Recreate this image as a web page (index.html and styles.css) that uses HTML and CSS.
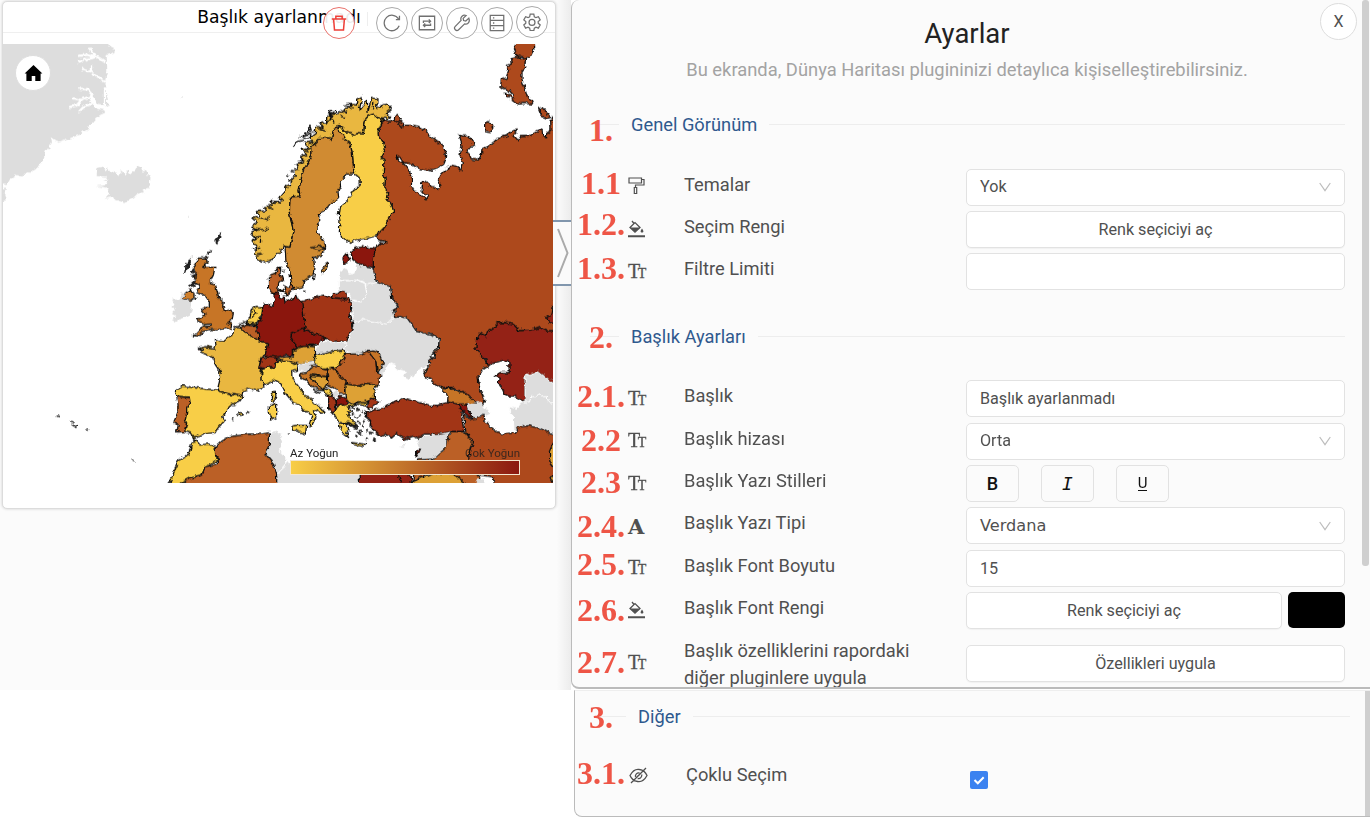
FILE: index.html
```html
<!DOCTYPE html>
<html lang="tr">
<head>
<meta charset="utf-8">
<title>Ayarlar</title>
<link rel="stylesheet" href="styles.css">
</head>
<body>
<svg class="defs" aria-hidden="true">
  <symbol id="chev" viewBox="0 0 12 10"><path d="M.7 1 6 8.600 11.300 1" fill="none" stroke="#bdbdbd" stroke-width="1.200"/></symbol>
  <symbol id="bucket" viewBox="0 0 17 18"><path d="M4 1l2 2.500M2 7.500 7 2.600l5 5-5 4.600z" fill="none" stroke="#505050" stroke-width="1.300"/><path d="M2 7.500h10l-5 4.700z" fill="#505050"/><path d="M14 8.600c2 2.700 1.700 4 0 4s-2-1.300 0-4z" fill="#505050"/><path d="M0 15.200h17v2H0z" fill="#505050"/></symbol>
</svg>
<div class="workspace">
  <section class="card">
    <header class="card-head">
      <h2 class="card-title">Başlık ayarlanmadı</h2>
      <i class="head-sep"></i>
      <div class="tools">
        <button class="tool danger"><svg viewBox="0 0 20 20"><path d="M2 5.500h16M6.500 5V2.500h7V5M4 5.500l1 12.300h10l1-12.300"/></svg></button>
        <button class="tool"><svg viewBox="0 0 20 20"><path d="M17.300 5.500A8.600 8.600 0 1 0 18 13M18.300 2V6.300h-4"/></svg></button>
        <button class="tool"><svg viewBox="0 0 20 20"><path d="M1.500 2.500h17v15h-17zM6 10V8h8M12 6l2 2-2 2M14 10.500v2H6M8 10.500l-2 2 2 2"/></svg></button>
        <button class="tool"><svg viewBox="0 0 20 20"><path d="M17.600 4.600l-3.400 3.200-2.400-.5-.5-2.400 3.300-3.200c-3.300-1.200-7 1.400-5.600 5.400L2.300 14c-2 2.300 1.400 5.600 3.700 3.700l6.900-6.700c4 1.400 6.200-3 4.700-6.400z"/></svg></button>
        <button class="tool"><svg viewBox="0 0 20 20"><path d="M2.500 1.500h15v17h-15zM2.500 7.200h15M2.500 12.900h15M5.500 4.400h1.500M5.500 10h1.500M5.500 15.700h1.500"/></svg></button>
        <button class="tool last"><svg viewBox="0 0 20 20"><path d="M8 1.300h4l.6 2.900 1.800 1 2.700-1 2 3.500-2.200 1.900v1.800l2.200 1.900-2 3.500-2.700-1-1.800 1-.6 2.900H8l-.6-2.900-1.800-1-2.700 1-2-3.500 2.200-1.900V9.600L.9 7.700l2-3.500 2.700 1 1.800-1z"/><circle cx="10" cy="10.500" r="3.300"/></svg></button>
      </div>
    </header>
    <div class="map">
      <svg class="map-svg" viewBox="9 132 1650 1317">
        <filter id="coast" filterUnits="userSpaceOnUse" x="0" y="120" width="1680" height="1350">
          <feTurbulence type="fractalNoise" baseFrequency=".07" numOctaves="2" seed="4"/>
          <feDisplacementMap in="SourceGraphic" scale="16" xChannelSelector="R" yChannelSelector="G"/>
        </filter>
        <g filter="url(#coast)">
        <g class="none">
          <path d="M-9 112H315L330 138 345 146 343 160 320 165 322 210 316 240 320 270 322 290 326 320 308 322 316 338 300 345 282 362 265 385 245 402 215 413 195 420 176 428 152 412 156 428 137 455 132 475 118 499 100 509 95 518 78 517 67 530 50 525 30 538 22 552 -9 548zM-9 570 22 566 14 578 20 600 -9 608z"/>
          <path d="M292 505 308 500 320 514 327 505 332 524 345 513 355 528 364 512 376 524 386 510 391 522 403 512 411 496 424 504 425 515 440 512 443 528 452 532 449 553 437 568 411 582 398 596 371 610 350 600 335 592 314 596 320 588 330 580 318 563 290 558 313 556 326 549 309 540 324 540 318 530 290 528z"/>
        </g>
        <path class="fjord" d="M318 188 300 176 284 166 268 144M284 172 262 164 234 168M284 172 258 178 234 186M318 248 294 230 276 216 246 206M276 216 276 192M315 262V320M328 330 290 322 278 286 262 268 238 266M282 310 254 318 234 338M278 286 244 300 218 294M244 300 230 316 208 322"/>
        <path class="fjord wide" d="M316 322 286 318 274 290"/>
        <path class="none" d="M540 290h3v3h-3zM561 654h3v3h-3z"/>

        <g transform="translate(690 0)">
          <path class="c-ru" d="M455 370 462 362 480 366 495 360 512 372 520 375 548 376 563 378 585 390 600 408 618 422 627 428 640 440 646 455 650 468 642 488 625 505 605 512 580 508 560 502 540 490 520 488 510 472 500 468 508 486 522 492 530 502 540 518 545 542 544 558 551 572 565 578 575 590 590 596 596 586 583 578 573 566 576 546 590 548 605 558 625 568 633 558 625 540 635 522 650 508 660 495 680 498 692 512 697 490 690 465 696 440 692 418 685 403 698 408 715 408 728 422 734 438 720 442 709 458 718 464 725 478 745 480 754 465 756 450 780 435 800 418 832 406 840 394 862 390 850 405 865 422 872 410 900 408 918 398 936 388 938 408 950 414 950 400 963 390 962 366 969 350H995V992L950 993 930 983 905 990 870 993 850 973 825 968 805 968 790 985 770 1008 750 1000 738 1035 755 1065 770 1090 780 1095 760 1108 744 1130 750 1170 765 1202 755 1215 735 1210 700 1180 665 1162 630 1162 595 1135 578 1120 592 1106 602 1088 594 1080 616 1070 612 1058 625 1050 628 1015 600 1002 585 998 560 995 550 980 534 976 532 955 515 950 495 952 490 930 508 922 494 912 490 900 482 862 440 845 430 820 428 780 435 745 450 728 468 730 465 722 450 722 440 705 465 680 472 666 491 630 481 608 468 600 473 580 464 560 466 540 460 520 462 480 453 470 466 445 460 425 446 412 444 395z"/>
          <path class="c-ru" d="M865 112H912L914 142 900 172 885 175 860 168 855 158 850 146zM842 178 862 170 872 178 890 174 886 205 876 215 876 240 885 265 892 290 910 305 906 312 885 310 865 312 845 298 850 285 838 272 822 265 812 258 814 238 828 235 836 210 832 200 844 195zM826 280 840 284 842 296 830 290zM764 370 775 365 792 380 782 398 764 395zM926 325 936 322 952 340 962 352 952 355 935 348z"/>
          <path class="c-ru" d="M495 350 505 346 514 356 505 364 520 372 518 384 505 370 492 362z"/>
          <path class="c-fi" d="M455 370 444 395 446 412 460 425 466 445 453 470 462 480 460 520 466 540 464 560 473 580 468 600 481 608 491 630 472 666 465 680 440 705 430 710 400 718 380 722 360 730 345 718 330 712 334 700 328 695 330 660 325 645 328 622 345 610 355 596 365 585 370 572 385 560 391 555 390 535 375 522 371 512 367 460 360 430 345 418 338 405 328 395 325 380 336 382 345 395 372 405 383 400 400 402 402 385 406 358 414 348 430 342 442 352 450 354 455 362z"/>
          <path class="c-no" d="M165 740 180 742 190 690 178 640 180 600 188 590 210 588 207 570 218 515 240 478 246 460 245 440 274 412 305 415 311 390 325 376 336 382 345 395 372 405 383 400 400 402 402 385 406 358 414 348 430 342 442 352 450 354 455 370 465 362 456 350 468 352 475 360 482 352 468 340 484 326 472 312 455 316 440 325 441 296 427 292 420 312 414 335 412 300 398 320 387 334 397 290 380 297 380 312 362 310 366 322 344 325 350 336 332 332 320 345 312 338 300 360 306 340 290 350 290 368 270 370 280 384 258 378 256 400 240 412 248 424 226 430 234 448 215 448 230 462 212 472 218 485 198 490 206 508 192 510 196 528 180 545 182 560 165 556 165 575 148 596 160 600 138 605 120 602 128 615 100 620 110 632 82 635 86 650 66 655 86 665 65 680 82 690 64 700 75 712 66 722 80 742 74 765 84 778 105 788 125 780 140 762 155 758 160 735z"/>
          <path class="ink" d="M190 440 198 426 222 420M206 412 228 404 252 395M215 410 232 402 244 410 226 416zM232 396 240 378 244 392 222 400 240 404M290 348 296 334 304 350M340 315 364 312 370 325M172 528l6-4M182 514l7 2M120 600l30 10M75 650l35 8 12-8M66 690l40-2 6-4M68 720l22-12 2 18M68 745l26 4M80 765l18-4M110 620l20 8M205 490l18-6M225 455l18-8M265 385l20 8M290 365l18-6 4 12M385 320l4 14M432 308l-5 20M300 336l4-6M318 338l3-6M162 562l14 4M240 426l12 4M330 345l12 8M350 318l14 10M460 356l-6 14"/>
          <path class="c-se" d="M325 385 328 395 338 405 345 418 360 430 367 460 371 512 375 522 348 522 340 535 330 543 332 560 324 575 326 592 300 612 285 632 268 638 270 655 261 678 262 700 272 710 285 728 287 740 275 765 258 772 250 772 253 790 250 822 222 842 218 860 190 868 183 842 180 815 168 785 165 740 180 742 190 690 178 640 180 600 188 590 210 588 207 570 218 515 240 478 246 460 245 440 274 412 305 415 311 390 320 384z"/>
          <path class="ink" d="M240 744 268 738 284 744 268 752 242 746"/>
          <path class="c-se" d="M276 810 283 796 294 790 288 805 279 820z"/>
        </g>

        <g transform="translate(450 690)">
          <path class="none seam" d="M585 345 600 325 608 290 608 278 635 268 710 280 728 263 755 260 772 265 790 290 800 305 840 312 868 325 865 350 840 378 850 385 835 392 842 403 805 422 798 435 772 450 755 440 770 425 740 418 735 405 720 400 700 430 690 432 682 430 695 410 700 400 684 364 670 360 655 362 630 372 608 372 583 362z"/>
          <path class="none seam" d="M605 232 605 212 635 215 650 190 645 165 680 155 715 165 722 170 725 205 748 230 730 240 735 262 728 263 710 282 635 268 608 278z"/>
          <path class="none seam" d="M565 152 600 152 620 150 645 160 650 190 635 215 605 210 595 190 565 180z"/>
          <path class="none seam" d="M565 150 570 122 582 115 592 116 600 133 612 130 618 102 632 98 645 108 668 112 680 155 652 165 640 155 620 150 600 152z"/>
          <path class="ink" d="M668 112 680 155 715 165 722 170 725 205 748 230 730 240 735 262 755 260 772 265 790 290 800 305 840 312 868 325 865 350 840 378 850 385 835 392 842 403"/>
          <path class="c-dr" d="M602 66 615 55 640 50 675 57 670 90 670 112 645 108 620 98 608 88zM578 84 592 70 594 82 600 92 582 98z"/>
          <path class="c-uk" d="M145 85 170 83 175 95 158 108 168 112 195 112 190 135 178 158 195 163 203 190 207 205 220 215 218 228 224 245 238 240 250 250 246 270 233 278 245 285 243 295 215 297 198 300 182 298 160 305 145 318 133 317 150 298 165 290 184 288 183 282 160 284 158 278 140 270 160 260 165 252 155 240 168 232 178 232 178 215 165 196 150 192 140 188 148 165 135 160 140 150 128 145 140 130 130 120 138 100z"/>
          <path class="ink fill" d="M197 30 212 10 210 22 200 42zM170 75 182 58 180 72zM103 130 108 98 124 85 118 108zM120 125 132 115 130 130zM118 165 132 152 140 160 128 176zM124 138l10-5 3 10zM135 200l4 3-2 8z"/>
          <path class="c-ni" d="M97 205 105 190 120 180 132 190 132 204 120 212z"/>
          <path class="none" d="M96 186 105 190 97 206 118 212 126 215 125 238 118 258 90 268 75 278 63 270 80 258 66 250 75 240 64 230 74 222 66 210 90 208z"/>
          <path class="c-fr" d="M265 292 280 302 300 315 322 328 335 335 353 342 347 372 333 386 328 408 335 412 333 430 338 450 345 468 320 482 300 476 280 482 275 498 240 492 215 486 202 480 212 440 206 430 207 418 214 430 198 405 190 382 165 373 152 368 160 362 148 355 165 350 190 354 198 350 196 328 208 332 225 333 230 322 248 314 252 297z"/>
          <path class="c-be" d="M265 292 290 285 315 288 320 302 325 310 327 332 310 322 300 315 280 302z"/>
          <path class="c-nl" d="M288 283 300 262 304 238 318 232 338 235 336 252 330 260 333 274 318 276 320 290 308 282z"/>
          <path class="ink" d="M306 262 318 250 312 240M292 280 330 282M250 292 276 280 292 272"/>
          <path class="c-dk" d="M385 190 368 190 356 178 355 140 376 132 382 118 392 112 390 130 398 150 386 160 383 178zM402 168 415 172 428 155 425 180 412 194 405 185zM386 180 396 178 398 190z"/>
          <path class="ink" d="M398 122h6M460 182l6 4M385 175l10 8M405 200l10-6M490 150l4-20"/>
          <path class="c-dr" d="M338 235 345 222 368 228 375 210 370 190 385 192 390 205 402 200 405 216 430 205 440 195 446 210 457 215 462 240 460 255 466 285 463 297 440 303 420 315 430 335 443 352 430 360 430 380 410 376 375 382 345 378 353 342 325 330 327 315 320 302 325 275 335 265z"/>
          <path class="c-pl" d="M455 215 490 205 520 195 540 203 590 206 602 210 605 235 600 250 608 280 608 292 598 310 590 335 560 333 545 335 525 325 515 315 490 312 466 297 462 260z"/>
          <path class="c-pl" d="M543 203 548 192 560 192 568 184 588 186 590 205z"/>
          <path class="c-dr" d="M420 315 440 303 460 297 478 305 490 312 512 314 525 325 505 345 480 345 465 348 443 352 430 335z"/>
          <path class="none seam" d="M497 362 510 340 530 332 555 337 590 336 582 360 550 364 520 372 500 370z"/>
          <path class="c-au" d="M378 384 400 382 412 380 430 384 432 362 445 353 470 348 495 350 497 370 490 392 475 396 445 402 415 392 390 393z"/>
          <path class="c-hu" d="M497 372 520 372 550 364 580 360 588 372 570 400 560 412 520 418 500 408 490 390z"/>
          <path class="c-ch" d="M328 408 335 386 355 378 378 382 385 395 375 402 370 415 360 408 345 416 330 412z"/>
          <path class="c-fi" d="M335 432 336 418 345 416 360 408 370 415 378 402 390 393 415 392 440 402 440 420 425 425 426 445 450 475 468 500 485 506 490 520 508 528 522 545 515 550 500 540 490 545 498 560 485 588 477 586 485 560 475 545 465 545 450 525 430 518 405 488 392 460 375 450 345 465 337 455zM425 588 440 586 470 586 467 612 445 605 428 598zM358 525 370 528 380 522 380 562 364 570 358 550zM366 490 376 484 378 500 372 518 364 508z"/>
          <path class="none seam" d="M440 404 475 396 490 394 497 405 480 420 468 428 445 422z"/>
          <path class="c-uk" d="M445 434 465 430 485 410 500 406 520 418 530 420 532 440 482 434 484 445 500 462 520 482 505 480 475 458 462 445 455 440z"/>
          <path class="ink" d="M465 450 490 478 510 490M445 435l10 10"/>
          <path class="c-au" d="M480 436 532 440 534 462 520 480 500 462z"/>
          <path class="c-uk" d="M528 416 545 412 560 425 575 440 590 452 585 465 588 488 565 494 560 478 548 472 532 465 536 440z"/>
          <path class="c-fi" d="M520 480 532 474 547 484 540 498 524 490z"/>
          <path class="none seam" d="M545 492 558 480 570 490 560 502 550 500z"/>
          <path class="c-pl" d="M536 498 546 495 556 515 556 545 548 552 536 538z"/>
          <path class="c-dr" d="M555 515 565 500 585 500 593 512 588 524 562 528z"/>
          <path class="c-ro" d="M545 412 560 412 570 400 588 372 608 372 630 372 655 362 678 395 680 428 700 436 685 445 684 465 650 460 625 468 590 462 588 450 570 440 562 425z"/>
          <path class="c-uk" d="M655 362 670 360 684 364 700 400 695 410 682 430 678 395z"/>
          <path class="c-bg" d="M588 462 625 468 650 460 684 465 672 485 674 505 652 512 640 520 600 520 590 510 588 488z"/>
          <path class="c-fi" d="M552 552 562 530 600 520 640 518 652 514 648 528 620 522 598 532 605 548 592 545 600 565 625 590 612 585 600 580 590 585 597 600 590 605 596 622 580 610 570 595 568 582 595 582 565 575 555 560zM603 638 648 643 640 650 608 644z"/>
          <path class="ink fill" d="M592 575l35 20-6 2-30-16zM620 535l8 4-8 4zM645 545l8 2-4 6zM638 568l10 4-6 8zM660 580l5 6-6 4zM630 600l6 4-5 4zM618 616l5 3-6 3zM660 605l8 3-6 5zM650 622l4 5-6 2zM672 622l5 8-4 8-4-6zM606 550l5 3-4 3zM628 556l4 3-4 4zM640 585l5 3-4 4zM650 600l4 5-4 2z"/>
          <path class="ink" d="M590 532 608 528 614 538M630 548l10-6M612 560l14 4M645 560l12 6M632 580l-8-4M620 605l14 8"/>
          <path class="c-tr" d="M652 514 664 504 690 514 675 525 655 538zM650 548 670 540 700 535 710 525 765 505 785 512 805 517 840 526 865 526 888 518 910 518 925 522 938 540 935 560 942 605 900 605 880 610 850 612 825 612 805 625 790 618 765 628 740 610 725 624 705 612 690 618 675 605 662 590 662 575 650 562z"/>
          <path class="c-uk" d="M870 472 905 475 925 488 945 488 978 520 955 524 925 522 905 518 893 515 894 498z"/>
          <path class="none" d="M950 522 978 520 995 518 1000 528 1015 545 1020 548 1002 556 980 562 965 570 968 562 957 542z"/>
          <path class="c-dr" d="M925 522 950 522 955 540 968 562 968 568 945 550 935 540z"/>
          <path class="c-kz" d="M1011 403 1008 390 992 375 978 355 980 320 990 310 1008 320 1012 305 1030 293 1045 278 1065 278 1090 283 1108 302 1145 300 1170 293 1190 303 1235 300V458H1209L1165 425 1125 437V517L1095 498 1068 498 1060 480 1045 460 1048 445 1032 438 1052 428 1078 428 1076 392 1055 392 1030 400z"/>
          <path class="c-kz" d="M1235 218H1212L1206 250 1190 262 1195 275 1209 280H1235z"/>
          <path class="none seam" d="M1125 437 1165 425 1209 458H1235V615H1209L1170 595 1135 587 1105 592 1092 605 1090 560 1078 545 1078 530 1100 535 1112 520 1125 517z"/>
          <path class="none" d="M1070 502 1090 500 1112 520 1100 535 1075 530z" opacity="0"/>
          <path class="line-w" d="M1125 520 1142 518 1145 500 1160 500 1168 488 1180 500 1192 500 1195 518 1225 520"/>
          <path class="c-ru" d="M940 552 965 568 980 565 1002 556 1006 575 1020 590 1040 605 1060 613 1092 608 1105 592 1135 587 1170 595 1209 615H1235V785H1040L1030 740 1010 738 985 735 965 715 955 690 960 660 968 635 948 608z"/>
          <path class="c-ro" d="M905 605 942 605 950 615 968 638 960 655 955 680 965 710 982 735 990 745 978 785H945L910 730 850 715 850 685 885 655 892 625z"/>
          <path class="none" d="M802 630 825 618 880 610 905 605 890 622 888 650 850 685 840 695 805 700 800 680 810 655z"/>
          <path class="c-dr" d="M800 665 812 655 808 665 798 682z"/>
          <path class="c-ro" d="M790 740 800 690 850 688 840 730 800 745 788 757z"/>
          <path class="c-au" d="M785 785V759L810 740 830 740 855 728 910 732 945 759V785z"/>
          <path class="none" d="M975 785V759L982 745 1000 745 1008 759V785zM745 650 770 643 765 650z"/>
          <path class="sea" d="M1000 785V748L1015 752 1030 744 1040 785z"/>
          <path class="c-au" d="M1235 640H1209L1198 665 1200 700 1209 712H1235zM1235 735H1209L1203 745 1209 757H1235z"/>
          <path class="none seam" d="M380 785 378 735 405 710 405 695 440 700 625 705 632 785z"/>
          <path class="c-kz" d="M626 706H768L782 745 790 785H630z"/>
          <path class="ink" d="M745 735 755 759"/>
          <path class="none seam" d="M358 612 380 604 398 612 392 630 400 642 388 660 408 682 404 708 380 735 370 700 345 670 358 645z"/>
          <path class="c-ro" d="M195 650 215 632 240 620 300 612 330 613 358 608 358 645 345 670 370 700 380 735V785H65L95 759 120 745 150 738 165 712 205 700 205 685 197 675z"/>
          <path class="c-fi" d="M50 785 60 759 75 718 85 690 115 675 125 640 140 632 150 645 175 642 195 650 197 675 205 690 188 700 165 712 155 735 125 742 95 759 65 785z"/>
          <path class="c-ro" d="M80 500 118 502 120 515 110 530 110 550 106 570 110 580 104 605 80 606 85 585 72 575 84 545 84 520z"/>
          <path class="c-fi" d="M80 498 76 480 95 468 150 475 200 480 240 494 278 498 268 512 235 530 218 560 224 572 205 592 195 608 160 612 145 617 134 625 120 608 104 605 110 580 106 570 110 550 110 530 120 515 118 502zM262 556 272 548 280 554 272 560z"/>
          <path class="ink" d="M288 548l4-3 6 3M245 570l5-5M132 625 140 634M417 611l2 2M-52 690l6 2M-280 558l8 2M-238 574l12 2M-236 582l14 10 2-6M-190 594l4 8"/>
        </g>
        </g>
      </svg>
      <button class="home"><svg viewBox="0 0 20 18"><path d="M10 0 0 9.500h2V18h6v-5.500h4V18h6V9.500h2z"/></svg></button>
      <div class="legend">
        <div class="legend-text"><span>Az Yoğun</span><span>Çok Yoğun</span></div>
        <div class="legend-bar"></div>
      </div>
    </div>
  </section>
  <button class="drawer-tab"><svg viewBox="0 0 12 50"><path d="M1 1 10.500 25 1 49"/></svg></button>
</div>

<main class="side">
  <section class="panel">
    <i class="scroll"></i>
    <button class="close">X</button>
    <h1>Ayarlar</h1>
    <p class="sub">Bu ekranda, Dünya Haritası plugininizi detaylıca kişiselleştirebilirsiniz.</p>

    <div class="divider"><span>Genel Görünüm</span></div>
    <div class="row"><svg class="ico" viewBox="0 0 17 18"><path d="M1 1h12.500v5H1zM13.500 2.500h2.500v5.500H7.500V10.500M6.300 10.500h2.400v6H6.300z" fill="none" stroke="#505050" stroke-width="1.200"/></svg><label>Temalar</label><div class="field"><span>Yok</span><svg class="chev"><use href="#chev"/></svg></div></div>
    <div class="row"><svg class="ico"><use href="#bucket"/></svg><label>Seçim Rengi</label><button class="field btn">Renk seçiciyi aç</button></div>
    <div class="row"><span class="ico tt">T<small>T</small></span><label>Filtre Limiti</label><div class="field"></div></div>

    <div class="divider second"><span>Başlık Ayarları</span></div>
    <div class="row"><span class="ico tt">T<small>T</small></span><label>Başlık</label><div class="field">Başlık ayarlanmadı</div></div>
    <div class="row"><span class="ico tt">T<small>T</small></span><label>Başlık hizası</label><div class="field"><span>Orta</span><svg class="chev"><use href="#chev"/></svg></div></div>
    <div class="row"><span class="ico tt">T<small>T</small></span><label>Başlık Yazı Stilleri</label><div class="styles"><button class="style b">B</button><button class="style i">I</button><button class="style u"><span>U</span></button></div></div>
    <div class="row"><span class="ico face">A</span><label>Başlık Yazı Tipi</label><div class="field verdana">Verdana<svg class="chev"><use href="#chev"/></svg></div></div>
    <div class="row"><span class="ico tt">T<small>T</small></span><label>Başlık Font Boyutu</label><div class="field num">15</div></div>
    <div class="row"><svg class="ico"><use href="#bucket"/></svg><label>Başlık Font Rengi</label><div class="color"><button class="field btn">Renk seçiciyi aç</button><i class="swatch"></i></div></div>
    <div class="row tall"><span class="ico tt">T<small>T</small></span><label>Başlık özelliklerini rapordaki diğer pluginlere uygula</label><button class="field btn">Özellikleri uygula</button></div>
  </section>

  <section class="panel more">
    <i class="scroll"></i>
    <div class="divider"><span>Diğer</span></div>
    <div class="row"><svg class="ico eye" viewBox="0 0 19 17"><path d="M1 8.500C4 3 8 2 10.500 2.500 14 3 16.500 5 18 8.500 15 14 11 15 8.500 14.500 5 14 2.500 12 1 8.500zM2 16 17 1M6.500 10a3.300 3.300 0 0 1 4-4M12.700 7.500a3.300 3.300 0 0 1-4 4M8 9.800l3-2.600"/></svg><label>Çoklu Seçim</label><span class="check"><svg viewBox="0 0 18 18"><path d="M4.500 9l3.300 3.300 5.900-6"/></svg></span></div>
  </section>
</main>

<div class="marks">
  <b class="m1">1.</b><b class="m11">1.1</b><b class="m12">1.2.</b><b class="m13">1.3.</b>
  <b class="m2">2.</b><b class="m21">2.1.</b><b class="m22">2.2</b><b class="m23">2.3</b><b class="m24">2.4.</b><b class="m25">2.5.</b><b class="m26">2.6.</b><b class="m27">2.7.</b>
  <b class="m3">3.</b><b class="m31">3.1.</b>
</div>
</body>
</html>
```
FILE: styles.css
```css
* { box-sizing: border-box; }
body {
  margin: 0;
  width: 1370px;
  height: 818px;
  overflow: hidden;
  display: flex;
  position: relative;
  background: #fff;
  color: #505050;
  font-family: Roboto, "Liberation Sans", sans-serif;
}
button { font: inherit; color: inherit; margin: 0; padding: 0; }
.defs { position: absolute; width: 0; height: 0; }

/* Report area */
.workspace {
  width: 571px;
  height: 690px;
  flex: none;
  position: relative;
  padding: 1px 0 0 2px;
  background: linear-gradient(90deg, #fbfbfb 97.500%, #ececec);
}
.card {
  width: 554px;
  height: 508px;
  background: #fff;
  border: 1px solid #dcdcdc;
  border-radius: 5px;
  box-shadow: 0 0 3px rgba(0, 0, 0, .18);
}
.card-head {
  height: 31px;
  border-bottom: 1px solid #efefef;
  position: relative;
  text-align: center;
}
.card-title {
  margin: 0;
  font: 400 17.200px/30px "DejaVu Sans", sans-serif;
  color: #000;
}
.head-sep { position: absolute; left: 364px; top: 10px; width: 1px; height: 14px; background: #eee; }
.tools { position: absolute; left: 320px; top: 5px; display: flex; }
.tool {
  width: 32px;
  height: 32px;
  margin-right: 3px;
  border: 1px solid #a9a9a9;
  border-radius: 50%;
  background: #fff;
  display: grid;
  place-items: center;
}
.tool svg { width: 18px; height: 18px; fill: none; stroke: #707070; stroke-width: 1.400; }
.tool.danger { margin-right: 21px; border-color: #e9716b; background: rgba(255, 255, 255, .92); }
.tool.danger svg { stroke: #ee3f38; stroke-width: 1.700; }
.tool.last { margin-top: -1px; }

.map { position: relative; margin-top: 11px; height: 439px; }
.map-svg { display: block; width: 550px; height: 439px; }
.map-svg path { stroke: #111; stroke-width: 3.800; stroke-linejoin: round; }
.map-svg .none, .map-svg .none path { fill: #ddd; stroke: none; }
.map-svg .none.seam { stroke: #fff; stroke-width: 3; }
.map-svg .sea { fill: #fff; stroke: none; }
.map-svg .fjord { fill: none; stroke: #fff; stroke-width: 7; }
.map-svg .fjord.wide { stroke-width: 14; }
.map-svg .line-w { fill: none; stroke: #fff; stroke-width: 3; }
.map-svg .ink { fill: none; }
.map-svg .ink.fill { fill: #222; stroke-width: 2; }
.c-ru { fill: #ad4a1f; }
.c-fi { fill: #f8ce46; }
.c-no, .c-fr { fill: #e9b741; }
.c-se { fill: #d08b31; }
.c-uk { fill: #c77528; }
.c-ni { fill: #cf7e2c; }
.c-nl, .c-hu { fill: #f8ce46; }
.c-be, .c-dk, .c-ro { fill: #bb6025; }
.c-dr { fill: #8b1810; }
.c-pl, .c-ch, .c-tr { fill: #a23517; }
.c-au, .c-bg { fill: #dda136; }
.c-kz { fill: #942314; }

.home {
  position: absolute;
  left: 12px;
  top: 11px;
  width: 36px;
  height: 36px;
  border: 1px solid #ddd;
  border-radius: 50%;
  background: #fff;
  display: grid;
  place-items: center;
}
.home svg { width: 19px; height: 16px; }
.legend { position: absolute; left: 287px; top: 403px; width: 230px; color: #222; }
.legend-text { display: flex; justify-content: space-between; font-size: 11.500px; line-height: 13px; }
.legend-text span + span { color: rgba(30, 30, 30, .8); }
.legend-bar {
  height: 15px;
  border: 1px solid #f3e6cf;
  background: linear-gradient(90deg, #f8ce46, #8b1810);
}
.drawer-tab {
  position: absolute;
  left: 553px;
  top: 220px;
  width: 19px;
  height: 66px;
  border: solid #8196ad;
  border-width: 2px 0;
  background: #fafafa;
  display: grid;
  place-items: center;
}
.drawer-tab svg { width: 12px; height: 50px; fill: none; stroke: #aaa; stroke-width: 2; }

/* Settings */
.side { flex: 1; display: flex; flex-direction: column; }
.panel {
  position: relative;
  height: 689px;
  flex: none;
  overflow: hidden;
  padding: 0 25px 0 18px;
  border: solid #bbb;
  border-width: 0 0 2px 1px;
  border-radius: 8px 0 0 8px;
  background: #fbfbfb;
}
.scroll { position: absolute; right: 1px; top: 0; width: 7px; height: 566px; background: #cfcfcf; border-radius: 3px; }
.close {
  position: absolute;
  right: 13px;
  top: 3px;
  width: 37px;
  height: 37px;
  border: 1px solid #ddd;
  border-radius: 50%;
  background: #fff;
  font-size: 16px;
}
h1 {
  margin: 19px 0 0;
  padding-right: 1px;
  font-weight: 400;
  font-size: 27.500px;
  line-height: 30px;
  text-align: center;
  color: #222;
}
.sub {
  margin: 8px 0 0;
  padding-right: 1px;
  font-size: 18.350px;
  line-height: 26px;
  text-align: center;
  color: #a3a3a3;
}
.divider {
  height: 84.400px;
  padding-top: 2px;
  display: flex;
  align-items: center;
  gap: 12px;
  font-size: 18.300px;
  color: #2f598e;
}
.sub + .divider { margin-top: -1.400px; }
.divider.second { padding-top: 3px; }
.divider::before, .divider::after { content: ""; height: 1px; background: #ededed; }
.divider::before { width: 29px; }
.divider::after { flex: 1; }
.row {
  height: 42.400px;
  display: grid;
  grid-template-columns: 17px 243px 379px;
  column-gap: 39px;
  align-items: center;
  padding-left: 38px;
}
.row label { font-size: 18.300px; line-height: 27px; position: relative; top: -3px; }
.row .ico { width: 17px; height: 18px; position: relative; top: -1px; }
.tt { font: 20px/18px "Liberation Serif", serif; white-space: nowrap; letter-spacing: -2.500px; -webkit-text-stroke: .3px; }
.tt small { font-size: 14px; }
.row .face { top: 0; font: bold 21px/20px "DejaVu Serif", serif; }
.field {
  position: relative;
  height: 37px;
  width: 100%;
  display: flex;
  align-items: center;
  padding: 0 13px;
  border: 1px solid #e2e2e2;
  border-radius: 5px;
  background: #fff;
  font-size: 16.150px;
}
.field > span { position: relative; top: -1px; }
.btn { justify-content: center; box-shadow: 0 1px 1px rgba(0, 0, 0, .04); }
.chev { width: 12px; height: 10px; margin-left: auto; }
.verdana { font-family: "DejaVu Sans", sans-serif; }
.styles { display: flex; gap: 22px; }
.style {
  width: 53px;
  height: 37px;
  border: 1px solid #e2e2e2;
  border-radius: 5px;
  background: #fbfbfb;
  color: #111;
  font-size: 18px;
}
.b { font-weight: 500; }
.i { font-family: "DejaVu Sans Mono", monospace; font-style: italic; }
.u span { display: inline-block; border-bottom: 1px solid #111; line-height: 14px; font-size: 15px; position: relative; top: -2px; }
.color { display: flex; gap: 6px; }
.swatch { flex: none; width: 57px; height: 36px; border-radius: 5px; background: #000; }
.row.tall { height: 63px; }
.row.tall label { top: 1px; }

.panel.more {
  height: 127px;
  margin: 1px 0 0 3px;
  padding: 0 20px 0 18px;
  border-width: 1px;
  border-right: 0;
  border-top-color: #eee;
  border-radius: 0 0 0 8px;
}
.more .divider { height: 50px; padding: 0; }
.more .divider::before { width: 33px; }
.more .scroll { right: 0; width: 5px; height: 126px; border-radius: 0; }
.more .row { height: 70px; grid-template-columns: 19px 245px 18px; padding-left: 36px; column-gap: 38px; }
.more .row label { top: -2px; }
.eye { fill: none; stroke: #505050; stroke-width: 1.300; }
.row .eye { width: 19px; height: 17px; }
.check { width: 18px; height: 18px; border-radius: 2px; background: #3b82f0; position: relative; top: 4px; left: 1px; }
.check svg { display: block; fill: none; stroke: #fff; stroke-width: 2; }

/* Step numbers laid over the panels */
.marks b {
  position: absolute;
  left: 577px;
  font: bold 32px/32px "Liberation Serif", serif;
  color: #ee5546;
}
.marks .m1 { left: 589px; top: 114px; }
.marks .m11 { left: 581px; top: 167px; }
.marks .m12 { top: 208px; }
.marks .m13 { top: 252px; }
.marks .m2 { left: 589px; top: 321px; }
.marks .m21 { top: 380px; }
.marks .m22 { left: 581px; top: 424px; }
.marks .m23 { left: 581px; top: 466px; }
.marks .m24 { top: 510px; }
.marks .m25 { top: 548px; }
.marks .m26 { top: 594px; }
.marks .m27 { top: 646px; }
.marks .m3 { left: 589px; top: 701px; }
.marks .m31 { top: 757px; }
```
